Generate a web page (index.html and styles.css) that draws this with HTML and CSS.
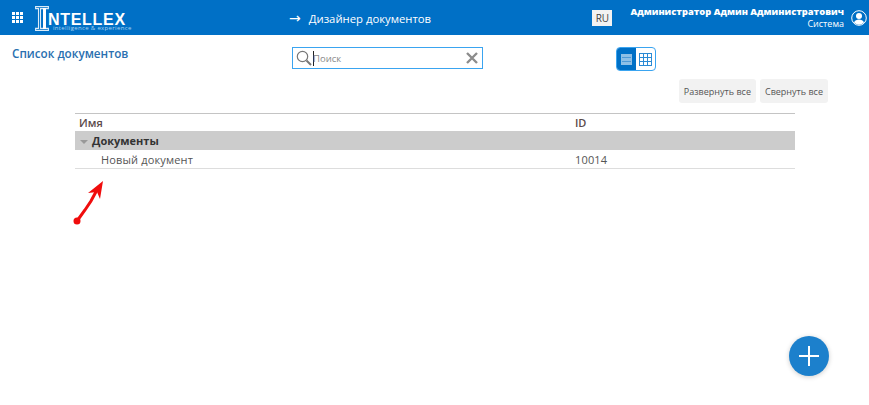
FILE: index.html
```html
<!DOCTYPE html>
<html lang="ru">
<head>
  <meta charset="UTF-8" />
  <title>Дизайнер документов</title>
  <link rel="stylesheet" href="styles.css">
</head>
<body>

  <header class="topbar">
    <div class="apps-icon">
      <span></span><span></span><span></span><span></span><span></span><span></span><span></span><span></span><span></span>
    </div>
    <div class="logo">
      <svg class="logo-mark" width="14" height="25" viewBox="0 0 14 25">
        <path d="M.6.6H13.400V2.600H5.500V22.400H13.400V24.400H.6V22.400H3.500V2.600H.6Z" fill="none" stroke="#dcecf8" stroke-width="1.100"/>
        <path d="M9.500 2V23" stroke="#fff" stroke-width="3"/>
      </svg>
      <div class="logo-text">
        <span class="logo-name">NTELLEX</span>
        <span class="logo-sub">intelligence &amp; experience</span>
      </div>
    </div>
    <div class="page-title"><span class="arrow">→</span>Дизайнер документов</div>
    <div class="lang">RU</div>
    <div class="user">
      <div class="user-name">Администратор Админ Администратович</div>
      <div class="user-role">Система</div>
    </div>
    <svg class="avatar" width="16" height="16" viewBox="0 0 16 16">
      <circle cx="8" cy="8" r="7.300" fill="#0070c6" stroke="#fff" stroke-width="1"/>
      <circle cx="8" cy="6" r="3" fill="#fff"/>
      <path d="M3 12.600c1-2.300 2.800-3 5-3s4 .7 5 3a7 7 0 0 1-10 0z" fill="#fff"/>
    </svg>
  </header>

  <main class="content">
    <div class="toolbar">
      <h2 class="list-title">Список документов</h2>
      <div class="search">
        <svg width="16" height="16" viewBox="0 0 16 16">
          <circle cx="6.500" cy="6.500" r="5.200" fill="none" stroke="#777" stroke-width="1.200"/>
          <path d="M10.500 10.500L15 15" stroke="#777" stroke-width="2"/>
        </svg>
        <span class="caret"></span>
        <span class="search-text">Поиск</span>
        <svg class="search-clear" width="12" height="12" viewBox="0 0 12 12">
          <path d="M1 1L11 11M11 1L1 11" stroke="#8c8c8c" stroke-width="2.400"/>
        </svg>
      </div>
      <div class="view-switch">
        <div class="view-btn active">
          <svg width="11" height="11" viewBox="0 0 11 11">
            <rect width="11" height="11" fill="#8fc0e6"/>
            <path d="M1 3.500H10M1 7.500H10" stroke="#4f9ad6" stroke-width="1"/>
          </svg>
        </div>
        <div class="view-btn">
          <svg width="13" height="13" viewBox="0 0 13 13">
            <rect x="0.500" y="0.500" width="12" height="12" fill="none" stroke="#2a8ad4"/>
            <path d="M4.500 0V13M8.500 0V13M0 4.500H13M0 8.500H13" stroke="#2a8ad4"/>
          </svg>
        </div>
      </div>
    </div>

    <div class="actions">
      <button class="action-btn">Развернуть все</button>
      <button class="action-btn">Свернуть все</button>
    </div>

    <div class="doc-table">
      <div class="row head">
        <div class="col-name">Имя</div>
        <div>ID</div>
      </div>
      <div class="row group">
        <div class="col-name"><span class="tri"></span>Документы</div>
      </div>
      <div class="row item">
        <div class="col-name">Новый документ</div>
        <div>10014</div>
      </div>
    </div>

    <svg class="red-arrow" width="34" height="48" viewBox="0 0 34 48">
      <circle cx="4" cy="43" r="3.500" fill="#f00d0d"/>
      <path d="M4 43L12 32L18 23L25 10" fill="none" stroke="#f00d0d" stroke-width="3"/>
      <path d="M15 15L30 3L27 21L24 14Z" fill="#f00d0d"/>
    </svg>
  </main>

  <button class="fab">
    <svg width="22" height="22" viewBox="0 0 22 22">
      <path d="M11 1V21M1 11H21" stroke="#fff" stroke-width="2"/>
    </svg>
  </button>

</body>
</html>
```

FILE: styles.css
```css
html, body {
  height: 100%;
}

body {
  margin: 0;
  font-family: 'Open Sans', sans-serif;
  background: #fff;
  color: #555;
  overflow: hidden;
}

.topbar {
  display: flex;
  align-items: center;
  height: 35px;
  background: #0070c6;
  color: #fff;
}

.apps-icon {
  display: grid;
  grid-template-columns: repeat(3, 3px);
  grid-auto-rows: 3px;
  gap: 1px;
  margin-left: 12px;
}

.apps-icon span {
  background: #fff;
}

.logo {
  display: flex;
  align-items: flex-start;
  align-self: flex-start;
  margin: 6px 0 0 12px;
}

.logo-text {
  display: flex;
  flex-direction: column;
  width: 78px;
}

.logo-name {
  font-family: 'Liberation Sans', sans-serif;
  font-size: 16px;
  font-weight: bold;
  letter-spacing: 0.700px;
  line-height: 14px;
  margin: 7px 0 0 -1px;
}

.logo-sub {
  font-size: 6px;
  line-height: 6px;
  letter-spacing: 0.340px;
  color: #a9d2f0;
  margin: -2px 0 0 4px;
  white-space: nowrap;
}

.page-title {
  margin-left: 162px;
  font-size: 11.300px;
}

.arrow {
  margin-right: 8px;
  font-family: 'DejaVu Sans', sans-serif;
  font-size: 14px;
}

.lang {
  margin-left: auto;
  width: 20px;
  height: 16px;
  background: #f2f2f2;
  color: #444;
  font-size: 10px;
  line-height: 16px;
  text-align: center;
}

.user {
  margin-left: 18px;
  text-align: right;
  line-height: 12px;
}

.user-name {
  font-size: 9.330px;
  font-weight: 800;
  white-space: nowrap;
}

.user-role {
  font-size: 9px;
}

.avatar {
  margin: 0 2px 0 7px;
}

.content {
  position: relative;
  padding: 0 41px 0 12px;
}

.toolbar {
  display: flex;
  align-items: flex-start;
  padding-top: 12px;
}

.list-title {
  width: 280px;
  margin: -1px 0 0;
  font-size: 11.700px;
  font-weight: 600;
  line-height: 14px;
  color: #2a70b0;
  white-space: nowrap;
}

.search {
  display: flex;
  align-items: center;
  box-sizing: border-box;
  width: 191px;
  height: 22px;
  padding: 0 4px 0 3px;
  border: 1px solid #3aa4f0;
}

.caret {
  width: 1px;
  height: 15px;
  margin: 0 -1px 0 1px;
  background: #222;
}

.search-text {
  font-size: 9.500px;
  color: #8a8a8a;
}

.search-clear {
  margin-left: auto;
}

.view-switch {
  display: flex;
  box-sizing: border-box;
  height: 24px;
  margin-left: 133px;
  border: 1px solid #3aa4f0;
  border-radius: 4px;
  overflow: hidden;
}

.view-btn {
  display: flex;
  align-items: center;
  justify-content: center;
  width: 19px;
}

.view-btn.active {
  background: #0070c6;
}

.actions {
  display: flex;
  justify-content: flex-end;
  gap: 4px;
  margin-top: 8px;
}

.action-btn {
  height: 24px;
  padding: 0 5px;
  border: none;
  border-radius: 3px;
  background: #f2f2f2;
  color: #555;
  font-family: 'Open Sans', sans-serif;
  font-size: 9px;
}

.doc-table {
  margin: 10px 33px 0 63px;
  border-top: 1px solid #c4c4c4;
}

.row {
  display: flex;
  align-items: center;
  font-size: 11px;
}

.col-name {
  width: 500px;
  box-sizing: border-box;
  padding-left: 4px;
}

.head {
  height: 17px;
  font-weight: 600;
  color: #5a4a4a;
}

.group {
  height: 19px;
  background: #cccccc;
  font-weight: 700;
  color: #333;
}

.tri {
  display: inline-block;
  margin: 0 4px 1px 1px;
  border-top: 4px solid #999;
  border-left: 4px solid transparent;
  border-right: 4px solid transparent;
}

.item {
  height: 18px;
  border-bottom: 1px solid #ddd;
  letter-spacing: 0.150px;
}

.item .col-name {
  padding-left: 26px;
}

/* hand drawn annotation lying on the page */
.red-arrow {
  position: absolute;
  left: 73px;
  top: 143px;
}

.fab {
  position: absolute;
  left: 789px;
  top: 336px;
  display: flex;
  align-items: center;
  justify-content: center;
  width: 40px;
  height: 40px;
  padding: 0;
  border: none;
  border-radius: 50%;
  background: #1c80cc;
  box-shadow: 0 1px 5px rgba(0,0,0,0.2);
}
```
